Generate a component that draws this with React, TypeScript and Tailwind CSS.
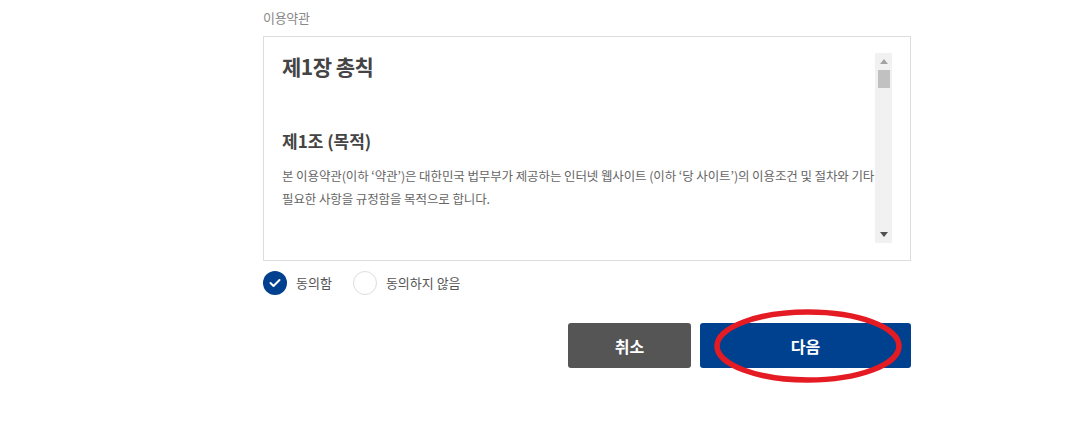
import React from "react";

const font = { fontFamily: '"Noto Sans CJK KR", "Noto Sans", sans-serif' };

export default function App() {
  return (
    <div className="w-[1084px] h-[442px] bg-white overflow-hidden" style={font}>
      <div className="ml-[263px] w-[648px] pt-[8px]">
        <div className="text-[13px] leading-[20px] text-[#888] tracking-[-0.3px]">이용약관</div>
        <div className="mt-[8px] border border-[#dddddd] pl-[18px] pr-[18px] pt-[16px] pb-[17px] flex">
          <div className="flex-1 h-[190px] text-[#444]">
            <div className="text-[21px] leading-[26px] font-bold tracking-[-0.5px]">제1장 총칙</div>
            <div className="mt-[49px] text-[17px] leading-[26px] font-bold">제1조 (목적)</div>
            <div className="mt-[10px] text-[12.5px] leading-[23px] text-[#666] whitespace-nowrap tracking-[-0.1px]">
              본 이용약관(이하 ‘약관’)은 대한민국 법무부가 제공하는 인터넷 웹사이트 (이하 ‘당 사이트’)의 이용조건 및 절차와 기타
              <br />
              필요한 사항을 규정함을 목적으로 합니다.
            </div>
          </div>
          <div className="w-[17px] h-[190px] bg-[#f1f1f1] flex flex-col items-center">
            <div className="h-[17px] w-full flex items-center justify-center">
              <svg width="8" height="5" viewBox="0 0 8 5"><polygon points="4,0 8,5 0,5" fill="#a3a3a3" /></svg>
            </div>
            <div className="w-[12px] h-[18px] bg-[#c1c1c1]" />
            <div className="flex-1" />
            <div className="h-[17px] w-full flex items-center justify-center">
              <svg width="8" height="5" viewBox="0 0 8 5"><polygon points="0,0 8,0 4,5" fill="#505050" /></svg>
            </div>
          </div>
        </div>

        <div className="mt-[10px] flex items-center h-[24px]">
          <div className="w-[24px] h-[24px] rounded-full bg-[#00408f] flex items-center justify-center">
            <svg width="12" height="10" viewBox="0 0 12 10">
              <polyline points="1.5,5 4.5,8 10.5,2" fill="none" stroke="white" strokeWidth="2" strokeLinecap="round" strokeLinejoin="round" />
            </svg>
          </div>
          <span className="ml-[9px] text-[13px] text-[#555]">동의함</span>
          <div className="ml-[21px] w-[24px] h-[24px] rounded-full border border-[#dddddd] bg-white" />
          <span className="ml-[9px] text-[13px] text-[#555]">동의하지 않음</span>
        </div>

        <div className="mt-[28px] flex justify-end gap-[9px]">
          <button className="w-[123px] h-[45px] rounded-[3px] bg-[#555555] text-white text-[16px] font-bold">취소</button>
          <div className="relative">
            <button className="w-[211px] h-[45px] rounded-[3px] bg-[#00418f] text-white text-[16px] font-bold">다음</button>
            <svg className="absolute left-[14px] top-[-14px] pointer-events-none" width="190" height="74" viewBox="0 0 190 74">
              <ellipse cx="94" cy="37" rx="91" ry="34" fill="none" stroke="#e51b24" strokeWidth="5.5" />
            </svg>
          </div>
        </div>
      </div>
    </div>
  );
}
